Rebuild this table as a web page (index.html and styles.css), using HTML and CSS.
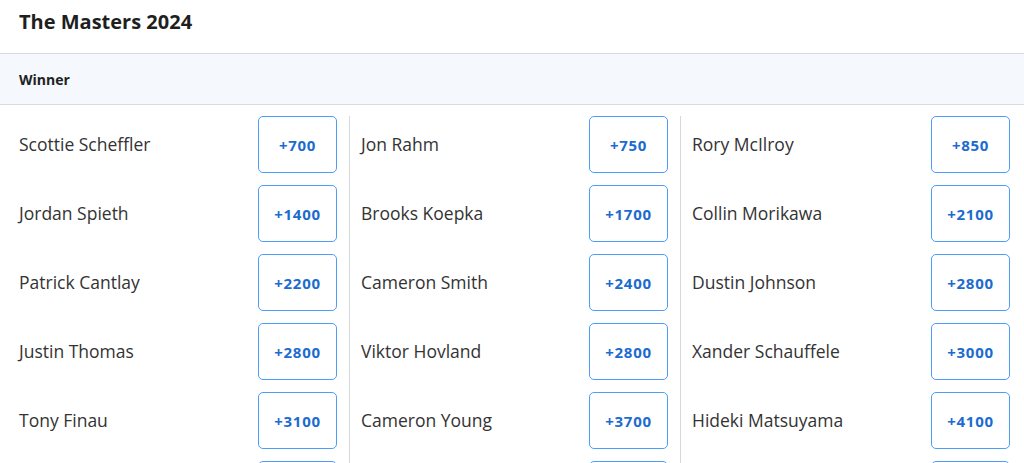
FILE: index.html
```html
<!DOCTYPE html>
<html>
<head>
<meta charset="utf-8">
<link rel="stylesheet" href="styles.css">
</head>
<body>
<div class="page">
  <h1 class="title">The Masters 2024</h1>
  <div class="market-header">Winner</div>
  <div class="grid">
    <div class="col col1">
      <div class="row"><span class="name">Scottie Scheffler</span><button class="odds">+700</button></div>
      <div class="row"><span class="name">Jordan Spieth</span><button class="odds">+1400</button></div>
      <div class="row"><span class="name">Patrick Cantlay</span><button class="odds">+2200</button></div>
      <div class="row"><span class="name">Justin Thomas</span><button class="odds">+2800</button></div>
      <div class="row"><span class="name">Tony Finau</span><button class="odds">+3100</button></div>
      <div class="row"><span class="name"></span><button class="odds"></button></div>
    </div>
    <div class="col col2">
      <div class="row"><span class="name">Jon Rahm</span><button class="odds">+750</button></div>
      <div class="row"><span class="name">Brooks Koepka</span><button class="odds">+1700</button></div>
      <div class="row"><span class="name">Cameron Smith</span><button class="odds">+2400</button></div>
      <div class="row"><span class="name">Viktor Hovland</span><button class="odds">+2800</button></div>
      <div class="row"><span class="name">Cameron Young</span><button class="odds">+3700</button></div>
      <div class="row"><span class="name"></span><button class="odds"></button></div>
    </div>
    <div class="col col3">
      <div class="row"><span class="name">Rory McIlroy</span><button class="odds">+850</button></div>
      <div class="row"><span class="name">Collin Morikawa</span><button class="odds">+2100</button></div>
      <div class="row"><span class="name">Dustin Johnson</span><button class="odds">+2800</button></div>
      <div class="row"><span class="name">Xander Schauffele</span><button class="odds">+3000</button></div>
      <div class="row"><span class="name">Hideki Matsuyama</span><button class="odds">+4100</button></div>
      <div class="row"><span class="name"></span><button class="odds"></button></div>
    </div>
  </div>
</div>
</body>
</html>
```
FILE: styles.css
```css
* { box-sizing: border-box; }
html, body {
  margin: 0;
  padding: 0;
  background: #ffffff;
  overflow: hidden;
  height: 463px;
}
body {
  font-family: "Open Sans", "Liberation Sans", sans-serif;
  color: #2b2b2b;
}
.title {
  margin: 0;
  height: 53px;
  padding: 9px 0 0 19px;
  font-size: 20px;
  line-height: 26px;
  font-weight: 700;
  color: #1f1f1f;
}
.market-header {
  height: 52px;
  border-top: 1px solid #d6dce4;
  border-bottom: 1px solid #d6dce4;
  background: #f5f8fd;
  padding-left: 19px;
  display: flex;
  align-items: center;
  font-size: 14px;
  font-weight: 700;
  color: #222;
}
.grid {
  display: grid;
  grid-template-columns: 350px 331px 1fr;
  padding-top: 11px;
}
.col {
  display: flex;
  flex-direction: column;
  gap: 12px;
}
.col1 { padding: 0 12px 0 19px; border-right: 1px solid #d5d9de; }
.col2 { padding: 0 12px 0 11px; border-right: 1px solid #d5d9de; }
.col3 { padding: 0 14px 0 11px; }
.row {
  display: flex;
  align-items: center;
  justify-content: space-between;
  height: 57px;
}
.name {
  font-size: 17.5px;
  color: #333333;
  line-height: 22px;
  padding-bottom: 1px;
}
.odds {
  width: 79px;
  height: 57px;
  border: 1.5px solid #4d9ef6;
  border-radius: 5px;
  background: #ffffff;
  font-family: "Open Sans", "Liberation Sans", sans-serif;
  font-size: 15px;
  letter-spacing: 0.7px;
  font-weight: 700;
  color: #1c6bd0;
  padding: 0;
}
```
